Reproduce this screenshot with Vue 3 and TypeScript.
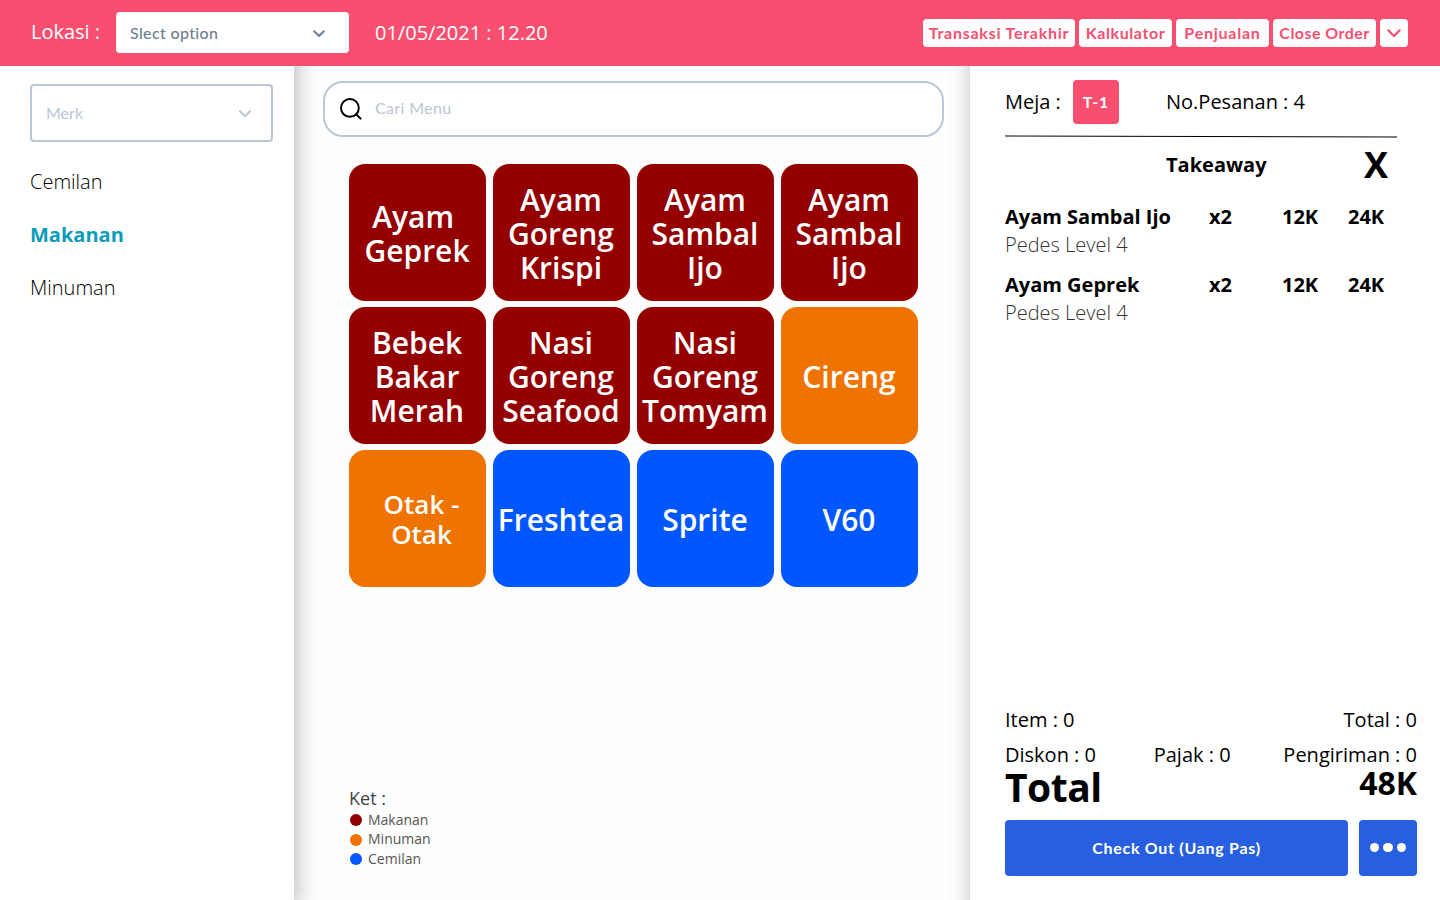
<script setup lang="ts">
interface MenuItem {
  name: string
  kind: 'food' | 'snack' | 'drink'
  small?: boolean
}

interface OrderLine {
  name: string
  note: string
  qty: string
  price: string
  total: string
}

const actions: { label: string; size: string }[] = [
  { label: 'Transaksi Terakhir', size: 'w-last' },
  { label: 'Kalkulator', size: 'w-calc' },
  { label: 'Penjualan', size: 'w-sales' },
  { label: 'Close Order', size: 'w-close' },
]

const categories: string[] = ['Cemilan', 'Makanan', 'Minuman']
const activeCategory = 'Makanan'

const menu: MenuItem[] = [
  { name: 'Ayam \nGeprek', kind: 'food' },
  { name: 'Ayam\nGoreng\nKrispi', kind: 'food' },
  { name: 'Ayam\nSambal\nIjo', kind: 'food' },
  { name: 'Ayam\nSambal\nIjo', kind: 'food' },
  { name: 'Bebek\nBakar\nMerah', kind: 'food' },
  { name: 'Nasi\nGoreng\nSeafood', kind: 'food' },
  { name: 'Nasi\nGoreng\nTomyam', kind: 'food' },
  { name: 'Cireng', kind: 'snack' },
  { name: 'Otak -\nOtak', kind: 'snack', small: true },
  { name: 'Freshtea', kind: 'drink' },
  { name: 'Sprite', kind: 'drink' },
  { name: 'V60', kind: 'drink' },
]

const legend: { label: string; kind: string }[] = [
  { label: 'Makanan', kind: 'food' },
  { label: 'Minuman', kind: 'snack' },
  { label: 'Cemilan', kind: 'drink' },
]

const lines: OrderLine[] = [
  { name: 'Ayam Sambal Ijo', note: 'Pedes Level 4', qty: 'x2', price: '12K', total: '24K' },
  { name: 'Ayam Geprek', note: 'Pedes Level 4', qty: 'x2', price: '12K', total: '24K' },
]
</script>

<template>
  <div class="page">
    <header class="topbar">
      <span class="loc-label">Lokasi :</span>
      <div class="loc-select">
        <span>Slect option</span>
        <svg width="12" height="8" viewBox="0 0 12 8"><path d="M1.2 1.2 6 6l4.8-4.8" /></svg>
      </div>
      <span class="clock">01/05/2021 : 12.20</span>
      <nav class="actions">
        <button v-for="a in actions" :key="a.label" class="action" :class="a.size">{{ a.label }}</button>
        <button class="action more">
          <svg width="14" height="9" viewBox="0 0 14 9"><path d="M1.3 1.3 7 7l5.7-5.7" /></svg>
        </button>
      </nav>
    </header>

    <main class="columns">
      <aside class="sidebar">
        <div class="brand-select">
          <span>Merk</span>
          <svg width="12" height="8" viewBox="0 0 12 8"><path d="M1 1.2 6 6.2l5-5" /></svg>
        </div>
        <ul class="categories">
          <li v-for="c in categories" :key="c" :class="{ active: c === activeCategory }">{{ c }}</li>
        </ul>
      </aside>

      <section class="catalog">
        <div class="search">
          <svg width="22" height="22" viewBox="0 0 22 22">
            <circle cx="9.9" cy="9.9" r="8.9" />
            <path d="m16.2 16.2 4.4 4.4" />
          </svg>
          <span>Cari Menu</span>
        </div>
        <div class="grid">
          <div v-for="(m, i) in menu" :key="i" class="tile" :class="[m.kind, { small: m.small }]">
            <span>{{ m.name }}</span>
          </div>
        </div>
        <div class="legend">
          <div class="legend-title">Ket :</div>
          <div v-for="l in legend" :key="l.label" class="legend-row">
            <i :class="l.kind"></i><span>{{ l.label }}</span>
          </div>
        </div>
      </section>

      <aside class="order">
        <div class="order-head">
          <span class="table-label">Meja :</span>
          <span class="table-no">T-1</span>
          <span class="order-no">No.Pesanan : 4</span>
        </div>
        <svg class="rule" width="392" height="3" viewBox="0 0 392 3"><path d="M0 1 392 2" /></svg>
        <div class="mode">
          <strong>Takeaway</strong>
          <b>X</b>
        </div>
        <div class="lines">
          <div v-for="l in lines" :key="l.name" class="line">
            <strong>{{ l.name }}</strong>
            <strong>{{ l.qty }}</strong>
            <strong>{{ l.price }}</strong>
            <strong>{{ l.total }}</strong>
            <span class="note">{{ l.note }}</span>
          </div>
        </div>
        <div class="summary">
          <div class="sum-row first"><span>Item : 0</span><span>Total : 0</span></div>
          <div class="sum-row"><span>Diskon : 0</span><span class="tax">Pajak : 0</span><span>Pengiriman : 0</span></div>
          <div class="grand"><strong>Total</strong><b>48K</b></div>
          <div class="pay">
            <button class="checkout">Check Out (Uang Pas)</button>
            <button class="dots"><i></i><i></i><i></i></button>
          </div>
        </div>
      </aside>
    </main>
  </div>
</template>

<style>
body {
  background: #fff;
  overflow: hidden;
}
</style>

<style scoped>
.page {
  width: 1440px;
  height: 900px;
  overflow: hidden;
  font-family: 'Open Sans', 'Noto Sans', sans-serif;
  font-size: 20px;
  line-height: 27px;
  color: #000;
  white-space: nowrap;
}
.page * {
  box-sizing: border-box;
}
svg {
  fill: none;
  stroke-linecap: round;
  stroke-linejoin: round;
  display: block;
  flex: none;
}
button {
  border: 0;
  padding: 0;
  display: flex;
  align-items: center;
  justify-content: center;
  white-space: nowrap;
}
.topbar {
  position: relative;
  z-index: 2;
  height: 66px;
  background: #f84f71;
  color: #fff;
  display: flex;
  align-items: center;
  padding: 0 32px 0 31px;
}
.loc-label {
  width: 85px;
  margin-top: -4px;
}
.loc-select {
  width: 233px;
  height: 41px;
  margin-top: -1px;
  border-radius: 4px;
  background: #fff;
  color: #6b7f92;
  display: flex;
  align-items: center;
  justify-content: space-between;
  padding: 2px 24px 0 14px;
  font: 500 16px/22px Lato, sans-serif;
  letter-spacing: 0.35px;
}
.loc-select span {
  margin-top: -2px;
}
.loc-select svg {
  stroke: #6b7f92;
  stroke-width: 2;
}
.clock {
  margin: -2px 0 0 26px;
}
.actions {
  margin-left: auto;
  display: flex;
  gap: 4px;
}
.action {
  height: 28px;
  border-radius: 4px;
  background: #fff;
  color: #f84f71;
  font: 700 16px/22px Lato, sans-serif;
}
.w-last { width: 152px; letter-spacing: 0.76px; }
.w-calc { width: 93px; letter-spacing: 0.6px; }
.w-sales { width: 93px; letter-spacing: 0.76px; }
.w-close { width: 103px; letter-spacing: 0.45px; }
.more { width: 28px; }
.more svg {
  stroke: #f84f71;
  stroke-width: 2.2;
}
.columns {
  height: 1000px;
  margin-top: -66px;
  display: grid;
  grid-template-columns: 294px 676px 470px;
}
.sidebar {
  position: relative;
  z-index: 1;
  height: 908px;
  background: #fff;
  box-shadow: 4px 0 20px rgba(0, 0, 0, 0.25);
  padding: 84px 21px 0 30px;
}
.brand-select {
  height: 58px;
  border: 2px solid #bac7d5;
  border-radius: 4px;
  display: flex;
  align-items: center;
  justify-content: space-between;
  padding: 2px 20px 0 14px;
  color: #bac7d5;
  font: 400 16px/22px Lato, sans-serif;
}
.brand-select span {
  margin-top: -2px;
}
.brand-select svg {
  stroke: #bac7d5;
  stroke-width: 2;
}
.categories {
  list-style: none;
  margin: 26px 0 0;
  padding: 0;
  display: flex;
  flex-direction: column;
  gap: 26px;
  font-weight: 300;
}
.categories .active {
  font-weight: 700;
  color: #0b9bbb;
}
.catalog {
  background: #fefefe;
  padding: 81px 26px 0 29px;
  height: 900px;
  display: flex;
  flex-direction: column;
}
.search {
  height: 56px;
  flex: none;
  border: 2px solid #bac7d5;
  border-radius: 20px;
  background: #fff;
  display: flex;
  align-items: center;
  padding-left: 15px;
  gap: 13px;
  color: #bac7d5;
  font: 400 16px/22px Lato, sans-serif;
  letter-spacing: 0.35px;
}
.search span {
  margin-top: -2px;
}
.search svg {
  stroke: #000;
  stroke-width: 2;
}
.grid {
  margin: 27px 0 0 26px;
  display: grid;
  grid-template-columns: repeat(4, 137px);
  grid-auto-rows: 137px;
  gap: 6px 7px;
}
.tile {
  border-radius: 16px;
  display: flex;
  align-items: center;
  justify-content: center;
  text-align: center;
  white-space: pre;
  color: #fff;
  font-size: 30px;
  line-height: 34px;
  font-weight: 600;
  padding: 2px 1px 0 0;
}
.tile.small {
  font-size: 26px;
  line-height: 30px;
  padding: 0 0 0 8px;
}
.food { background: #940000; }
.snack { background: #ee7300; }
.drink { background: #0057ff; }
.legend {
  margin: auto 0 31px 26px;
  color: #555;
}
.legend-title {
  font-size: 18px;
  line-height: 25px;
  color: #444;
}
.legend-row {
  height: 19.5px;
  display: flex;
  align-items: center;
  gap: 6px;
  font-size: 14px;
  line-height: 19px;
}
.legend-row i {
  width: 12px;
  height: 12px;
  margin-left: 1px;
  border-radius: 50%;
}
.legend-row span {
  margin-top: -2px;
}
.order {
  position: relative;
  z-index: 1;
  background: #fff;
  box-shadow: 0 0 20px rgba(0, 0, 0, 0.25);
  padding: 80px 23px 0 35px;
  height: 1000px;
  display: flex;
  flex-direction: column;
}
.order-head {
  display: flex;
  align-items: center;
}
.table-label {
  width: 68px;
  margin-top: -2px;
}
.table-no {
  width: 46px;
  height: 44px;
  border-radius: 4px;
  background: #f84f71;
  color: #fff;
  display: flex;
  align-items: center;
  justify-content: center;
  font: 700 16px/22px Lato, sans-serif;
  letter-spacing: 0.9px;
}
.order-no {
  margin: -2px 0 0 47px;
}
.rule {
  margin-top: 11px;
  stroke: #000;
  stroke-width: 1;
}
.mode {
  height: 54px;
  display: flex;
  align-items: center;
  padding: 0 0 2px 161px;
}
.mode b {
  margin-left: auto;
  margin-right: 29px;
  font-size: 36px;
}
.lines {
  margin-top: 11px;
  display: flex;
  flex-direction: column;
  gap: 12px;
}
.line {
  display: grid;
  grid-template-columns: 204px 73px 66px auto;
  grid-auto-rows: 28px;
}
.note {
  font-weight: 300;
  color: #333;
}
.summary {
  margin-top: auto;
  margin-bottom: 124px;
}
.sum-row {
  display: flex;
  justify-content: space-between;
}
.sum-row.first {
  margin-bottom: 8px;
}
.tax {
  margin-left: 5px;
}
.grand {
  height: 52px;
  display: flex;
  justify-content: space-between;
}
.grand strong {
  font-size: 39px;
  line-height: 38px;
  letter-spacing: -0.5px;
}
.grand b {
  font-size: 32px;
  line-height: 30px;
}
.pay {
  display: flex;
  gap: 11px;
}
.checkout {
  flex: 1;
  height: 56px;
  border-radius: 4px;
  background: #285fe1;
  color: #fff;
  font: 700 16px/22px Lato, sans-serif;
  letter-spacing: 0.72px;
}
.dots {
  width: 58px;
  height: 56px;
  border-radius: 4px;
  background: #285fe1;
  gap: 4px;
  padding-bottom: 1px;
}
.dots i {
  width: 9.5px;
  height: 9.5px;
  border-radius: 50%;
  background: #fff;
}
</style>
